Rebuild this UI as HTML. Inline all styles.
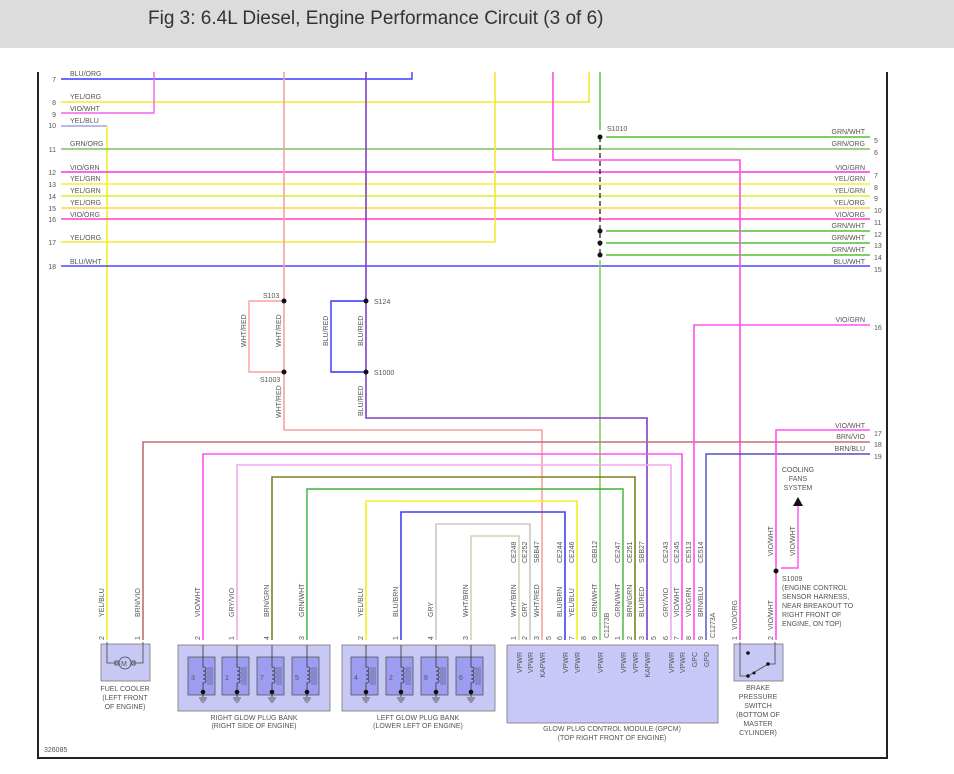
<!DOCTYPE html>
<html><head><meta charset="utf-8"><style>
html,body{margin:0;padding:0;background:#fff;width:954px;height:774px;overflow:hidden}
.hd{position:absolute;left:0;top:0;width:954px;height:48px;background:#dcdcdc}
.hd span{position:absolute;left:148px;top:8px;font:19px "Liberation Sans",sans-serif;color:#333}
svg{position:absolute;left:0;top:0}
text{font-family:"Liberation Sans",sans-serif;font-size:7px;fill:#555}
</style></head><body>
<div class="hd"><span>Fig 3: 6.4L Diesel, Engine Performance Circuit (3 of 6)</span></div>
<svg width="954" height="774" viewBox="0 0 954 774">
<g fill="none" stroke-width="1.4">
<path d="M38 72V758H887V72" stroke="#222" stroke-width="2"/>
<path d="M61 79H412V72" stroke="#3a3aff"/>
<path d="M61 102H589V72" stroke="#f4e830" stroke-width="1.6"/>
<path d="M61 113H154V72" stroke="#f060f0"/>
<path d="M61 126H107" stroke="#a0a0e8"/>
<path d="M107 126V640" stroke="#f4f020" stroke-width="1.6"/>
<path d="M61 149H870" stroke="#80c060" stroke-width="1.6"/>
<path d="M61 172H870" stroke="#ff30e0"/>
<path d="M61 184H870" stroke="#f4f030" stroke-width="1.6"/>
<path d="M61 196H870" stroke="#d8f030" stroke-width="1.6"/>
<path d="M61 208H870" stroke="#f8d840" stroke-width="1.6"/>
<path d="M61 219H870" stroke="#ff40c0"/>
<path d="M61 242H495V72" stroke="#f4e830" stroke-width="1.6"/>
<path d="M61 266H870" stroke="#4848ff"/>
<path d="M600 72V130" stroke="#50c030"/>
<path d="M600 137V255" stroke="#111" stroke-dasharray="5,3" stroke-width="1.2"/>
<path d="M606 137H870M606 231H870M606 243H870M606 255H870" stroke="#50c030"/>
<path d="M600 260V640" stroke="#80d060" stroke-width="1.6"/>
<path d="M553 72V160H740V640" stroke="#ff50e0" stroke-width="1.6"/>
<path d="M284 72V430H542V640" stroke="#f8a0a0" stroke-width="1.6"/>
<path d="M284 301H249V372H284" stroke="#f8a0a0"/>
<path d="M366 72V418H647V640" stroke="#8040c0" stroke-width="1.6"/>
<path d="M366 301H331V372H366" stroke="#3030ff"/>
<path d="M143 640V442H870" stroke="#c07070" stroke-width="1.6"/>
<path d="M203 640V454H682V640" stroke="#ff50f0" stroke-width="1.6"/>
<path d="M237 640V465H671V640" stroke="#f0a8f0" stroke-width="1.6"/>
<path d="M272 640V477H635V640" stroke="#808020" stroke-width="1.6"/>
<path d="M307 640V489H623V640" stroke="#40b040"/>
<path d="M366 640V501H577V640" stroke="#f0f020" stroke-width="1.6"/>
<path d="M401 640V512H565V640" stroke="#4040f0" stroke-width="1.6"/>
<path d="M436 640V524H530V640" stroke="#c8c8c8" stroke-width="1.6"/>
<path d="M471 640V536H519V640" stroke="#d8d0b0" stroke-width="1.6"/>
<path d="M870 325H694V640" stroke="#ff50f0" stroke-width="1.6"/>
<path d="M870 454H706V640" stroke="#5050c0"/>
<path d="M870 430H776V640" stroke="#ff50f0" stroke-width="1.6"/>
<path d="M781 568H798V503" stroke="#ff50f0" stroke-width="1.4"/>
</g>
<path d="M793 506L798 497L803 506Z" fill="#111"/>
<g fill="#111">
<circle cx="600" cy="137" r="2.5"/><circle cx="600" cy="231" r="2.5"/><circle cx="600" cy="243" r="2.5"/><circle cx="600" cy="255" r="2.5"/>
<circle cx="284" cy="301" r="2.5"/><circle cx="284" cy="372" r="2.5"/><circle cx="366" cy="301" r="2.5"/><circle cx="366" cy="372" r="2.5"/>
<circle cx="776" cy="571" r="2.5"/>
</g>
<g text-anchor="end">
<text x="56" y="82">7</text><text x="56" y="105">8</text><text x="56" y="117">9</text><text x="56" y="128">10</text><text x="56" y="152">11</text>
<text x="56" y="175">12</text><text x="56" y="187">13</text><text x="56" y="199">14</text><text x="56" y="211">15</text><text x="56" y="222">16</text><text x="56" y="245">17</text><text x="56" y="269">18</text>
</g>
<text x="70" y="76">BLU/ORG</text><text x="70" y="99">YEL/ORG</text><text x="70" y="111">VIO/WHT</text><text x="70" y="123">YEL/BLU</text><text x="70" y="146">GRN/ORG</text>
<text x="70" y="170">VIO/GRN</text><text x="70" y="181">YEL/GRN</text><text x="70" y="193">YEL/GRN</text><text x="70" y="205">YEL/ORG</text><text x="70" y="217">VIO/ORG</text><text x="70" y="240">YEL/ORG</text><text x="70" y="264">BLU/WHT</text>
<g text-anchor="end">
<text x="865" y="134">GRN/WHT</text><text x="865" y="146">GRN/ORG</text><text x="865" y="170">VIO/GRN</text><text x="865" y="181">YEL/GRN</text><text x="865" y="193">YEL/GRN</text><text x="865" y="205">YEL/ORG</text><text x="865" y="217">VIO/ORG</text>
<text x="865" y="228">GRN/WHT</text><text x="865" y="240">GRN/WHT</text><text x="865" y="252">GRN/WHT</text><text x="865" y="264">BLU/WHT</text>
<text x="865" y="322">VIO/GRN</text><text x="865" y="428">VIO/WHT</text><text x="865" y="439">BRN/VIO</text><text x="865" y="451">BRN/BLU</text>
</g>
<text x="874" y="143">5</text><text x="874" y="155">6</text><text x="874" y="178">7</text><text x="874" y="190">8</text><text x="874" y="201">9</text><text x="874" y="213">10</text><text x="874" y="225">11</text>
<text x="874" y="237">12</text><text x="874" y="248">13</text><text x="874" y="260">14</text><text x="874" y="272">15</text><text x="874" y="330">16</text><text x="874" y="436">17</text><text x="874" y="447">18</text><text x="874" y="459">19</text>
<text x="607" y="131">S1010</text>
<text x="263" y="298">S103</text><text x="260" y="382">S1003</text><text x="374" y="304">S124</text><text x="374" y="375">S1000</text>
<g text-anchor="middle"><text x="798" y="472">COOLING</text><text x="798" y="481">FANS</text><text x="798" y="490">SYSTEM</text></g>
<text x="782" y="581">S1009</text><text x="782" y="590">(ENGINE CONTROL</text><text x="782" y="599">SENSOR HARNESS,</text><text x="782" y="608">NEAR BREAKOUT TO</text><text x="782" y="617">RIGHT FRONT OF</text><text x="782" y="626">ENGINE, ON TOP)</text>
<g>
<text transform="translate(246,347) rotate(-90)">WHT/RED</text>
<text transform="translate(281,347) rotate(-90)">WHT/RED</text>
<text transform="translate(281,418) rotate(-90)">WHT/RED</text>
<text transform="translate(328,346) rotate(-90)">BLU/RED</text>
<text transform="translate(363,346) rotate(-90)">BLU/RED</text>
<text transform="translate(363,416) rotate(-90)">BLU/RED</text>
<text transform="translate(104,617) rotate(-90)">YEL/BLU</text>
<text transform="translate(140,617) rotate(-90)">BRN/VIO</text>
<text transform="translate(200,617) rotate(-90)">VIO/WHT</text>
<text transform="translate(234,617) rotate(-90)">GRY/VIO</text>
<text transform="translate(269,617) rotate(-90)">BRN/GRN</text>
<text transform="translate(304,617) rotate(-90)">GRN/WHT</text>
<text transform="translate(363,617) rotate(-90)">YEL/BLU</text>
<text transform="translate(398,617) rotate(-90)">BLU/BRN</text>
<text transform="translate(433,617) rotate(-90)">GRY</text>
<text transform="translate(468,617) rotate(-90)">WHT/BRN</text>
<text transform="translate(516,617) rotate(-90)">WHT/BRN</text><text transform="translate(516,563) rotate(-90)">CE248</text>
<text transform="translate(527,617) rotate(-90)">GRY</text><text transform="translate(527,563) rotate(-90)">CE252</text>
<text transform="translate(539,617) rotate(-90)">WHT/RED</text><text transform="translate(539,563) rotate(-90)">SBB47</text>
<text transform="translate(562,617) rotate(-90)">BLU/BRN</text><text transform="translate(562,563) rotate(-90)">CE244</text>
<text transform="translate(574,617) rotate(-90)">YEL/BLU</text><text transform="translate(574,563) rotate(-90)">CE246</text>
<text transform="translate(597,617) rotate(-90)">GRN/WHT</text><text transform="translate(597,563) rotate(-90)">CBB12</text>
<text transform="translate(609,638) rotate(-90)">C1273B</text>
<text transform="translate(620,617) rotate(-90)">GRN/WHT</text><text transform="translate(620,563) rotate(-90)">CE247</text>
<text transform="translate(632,617) rotate(-90)">BRN/GRN</text><text transform="translate(632,563) rotate(-90)">CE251</text>
<text transform="translate(644,617) rotate(-90)">BLU/RED</text><text transform="translate(644,563) rotate(-90)">SBB27</text>
<text transform="translate(668,617) rotate(-90)">GRY/VIO</text><text transform="translate(668,563) rotate(-90)">CE243</text>
<text transform="translate(679,617) rotate(-90)">VIO/WHT</text><text transform="translate(679,563) rotate(-90)">CE245</text>
<text transform="translate(691,617) rotate(-90)">VIO/GRN</text><text transform="translate(691,563) rotate(-90)">CE513</text>
<text transform="translate(703,617) rotate(-90)">BRN/BLU</text><text transform="translate(703,563) rotate(-90)">CE514</text>
<text transform="translate(715,638) rotate(-90)">C1273A</text>
<text transform="translate(737,630) rotate(-90)">VIO/ORG</text>
<text transform="translate(773,630) rotate(-90)">VIO/WHT</text>
<text transform="translate(773,556) rotate(-90)">VIO/WHT</text>
<text transform="translate(795,556) rotate(-90)">VIO/WHT</text>
</g>
<g>
<text transform="translate(104,640) rotate(-90)">2</text><text transform="translate(140,640) rotate(-90)">1</text>
<text transform="translate(200,640) rotate(-90)">2</text><text transform="translate(234,640) rotate(-90)">1</text><text transform="translate(269,640) rotate(-90)">4</text><text transform="translate(304,640) rotate(-90)">3</text>
<text transform="translate(363,640) rotate(-90)">2</text><text transform="translate(398,640) rotate(-90)">1</text><text transform="translate(433,640) rotate(-90)">4</text><text transform="translate(468,640) rotate(-90)">3</text>
<text transform="translate(516,640) rotate(-90)">1</text><text transform="translate(527,640) rotate(-90)">2</text><text transform="translate(539,640) rotate(-90)">3</text><text transform="translate(551,640) rotate(-90)">5</text><text transform="translate(562,640) rotate(-90)">6</text><text transform="translate(574,640) rotate(-90)">7</text><text transform="translate(586,640) rotate(-90)">8</text><text transform="translate(597,640) rotate(-90)">9</text>
<text transform="translate(620,640) rotate(-90)">1</text><text transform="translate(632,640) rotate(-90)">2</text><text transform="translate(644,640) rotate(-90)">3</text><text transform="translate(656,640) rotate(-90)">5</text><text transform="translate(668,640) rotate(-90)">6</text><text transform="translate(679,640) rotate(-90)">7</text><text transform="translate(691,640) rotate(-90)">8</text><text transform="translate(703,640) rotate(-90)">9</text>
<text transform="translate(737,640) rotate(-90)">1</text><text transform="translate(773,640) rotate(-90)">2</text>
</g>
<g stroke="#777" stroke-width="0.8">
<rect x="101" y="644" width="49" height="37" fill="#c8c8f4"/>
<rect x="178" y="645" width="152" height="66" fill="#c8c8f4"/>
<rect x="342" y="645" width="153" height="66" fill="#c8c8f4"/>
<rect x="507" y="645" width="211" height="78" fill="#c8c8f8"/>
<rect x="734" y="644" width="49" height="37" fill="#c8c8f4"/>
</g>
<g fill="none" stroke="#444" stroke-width="0.8">
<path d="M107 642V663H117M133 663H143V642"/>
<circle cx="125" cy="663" r="6" fill="#c8c8f4"/>
<rect x="115" y="661" width="3" height="4"/><rect x="132" y="661" width="3" height="4"/>
</g>
<text x="121" y="666" font-size="8" fill="#333">M</text>
<g text-anchor="middle">
<text x="125" y="691">FUEL COOLER</text><text x="125" y="700">(LEFT FRONT</text><text x="125" y="709">OF ENGINE)</text>
<text x="254" y="720">RIGHT GLOW PLUG BANK</text><text x="254" y="728">(RIGHT SIDE OF ENGINE)</text>
<text x="418" y="720">LEFT GLOW PLUG BANK</text><text x="418" y="728">(LOWER LEFT OF ENGINE)</text>
<text x="612" y="731">GLOW PLUG CONTROL MODULE (GPCM)</text><text x="612" y="740">(TOP RIGHT FRONT OF ENGINE)</text>
<text x="758" y="690">BRAKE</text><text x="758" y="699">PRESSURE</text><text x="758" y="708">SWITCH</text><text x="758" y="717">(BOTTOM OF</text><text x="758" y="726">MASTER</text><text x="758" y="735">CYLINDER)</text>
</g>
<text x="44" y="752">326085</text>
</svg>
<svg width="954" height="774" viewBox="0 0 954 774">
<defs>
<g id="p">
<rect x="-15" y="12" width="27" height="38" fill="#9c9cf0" stroke="#555" stroke-width="0.8"/>
<path d="M0 0V22c4 0 4 4 0 4c4 0 4 4 0 4c4 0 4 4 0 4c4 0 4 4 0 4V52" fill="none" stroke="#333" stroke-width="0.8"/>
<path d="M5 22V40M7 22V40M9 22V40" stroke="#333" stroke-width="0.4" fill="none"/>
<circle cx="0" cy="47" r="2.3" fill="#111"/>
<path d="M-4 53H4M-3 55H3M-1.5 57H1.5" stroke="#333" stroke-width="0.7" fill="none"/>
</g>
</defs>
<use href="#p" x="203" y="645"/><use href="#p" x="237" y="645"/><use href="#p" x="272" y="645"/><use href="#p" x="307" y="645"/>
<use href="#p" x="366" y="645"/><use href="#p" x="401" y="645"/><use href="#p" x="436" y="645"/><use href="#p" x="471" y="645"/>
<g font-family="Liberation Sans" font-size="7" fill="#333">
<text x="191" y="680">3</text><text x="225" y="680">1</text><text x="260" y="680">7</text><text x="295" y="680">5</text>
<text x="354" y="680">4</text><text x="389" y="680">2</text><text x="424" y="680">8</text><text x="459" y="680">6</text>
</g>
<g font-family="Liberation Sans" font-size="7" fill="#444" text-anchor="end">
<text transform="translate(522,652) rotate(-90)">VPWR</text><text transform="translate(533,652) rotate(-90)">VPWR</text><text transform="translate(545,652) rotate(-90)">KAPWR</text>
<text transform="translate(568,652) rotate(-90)">VPWR</text><text transform="translate(580,652) rotate(-90)">VPWR</text><text transform="translate(603,652) rotate(-90)">VPWR</text>
<text transform="translate(626,652) rotate(-90)">VPWR</text><text transform="translate(638,652) rotate(-90)">VPWR</text><text transform="translate(650,652) rotate(-90)">KAPWR</text>
<text transform="translate(674,652) rotate(-90)">VPWR</text><text transform="translate(685,652) rotate(-90)">VPWR</text><text transform="translate(697,652) rotate(-90)">GPC</text><text transform="translate(709,652) rotate(-90)">GPD</text>
</g>
<g fill="none" stroke="#444" stroke-width="0.8">
<path d="M740 642V676H748L768 664H775V642"/>
</g>
<g fill="#111"><circle cx="748" cy="676" r="1.8"/><circle cx="768" cy="664" r="1.8"/><circle cx="748" cy="653" r="1.8"/><circle cx="754" cy="673" r="1.5"/></g>
</svg>
</body></html>
